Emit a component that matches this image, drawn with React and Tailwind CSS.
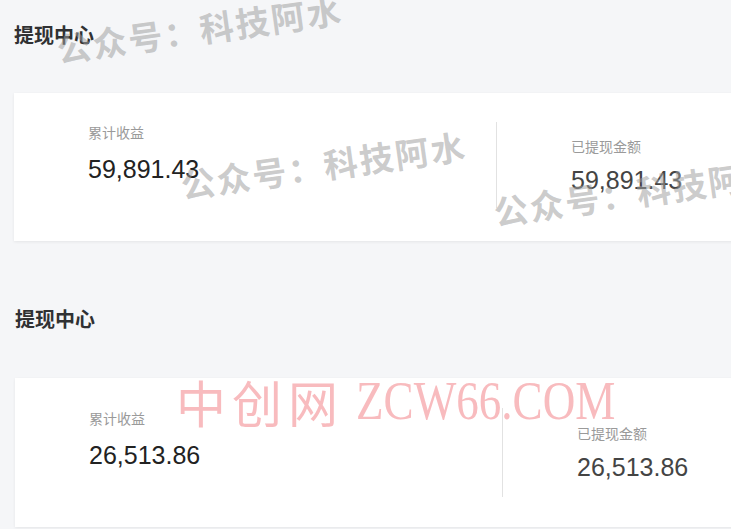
import React from "react";

const SANS = "font-['Liberation_Sans','Noto_Sans_CJK_SC',sans-serif]";

const panels = [
  { total: "59,891.43", withdrawn: "59,891.43", leftW: "w-[482px]", pad: "pt-[29px]", h: "h-[148px]", titleMt: "mt-0", cardMt: "mt-[43px]", dividerH: "h-[86px]" },
  { total: "26,513.86", withdrawn: "26,513.86", leftW: "w-[487px]", pad: "pt-[30px]", h: "h-[149px]", titleMt: "mt-[65px]", cardMt: "mt-[44px]", dividerH: "h-[89px]" },
];

// 提现中心卡片
const WithdrawPanel = ({ p, idx }) => (
  <section>
    <h2 className={`${p.titleMt} ${idx === 0 ? "ml-[14px]" : "ml-[15px]"} text-[20px] leading-[28px] font-bold text-[#303133]`}>
      提现中心
    </h2>
    <div className={`${p.cardMt} ${idx === 0 ? "ml-[14px]" : "ml-[15px]"} w-[760px] ${p.h} ${p.pad} bg-white shadow-[0_1px_3px_rgba(0,0,0,0.07)] flex items-start`}>
      <div className={`${p.leftW} pl-[74px] flex flex-col gap-[10px]`}>
        <span className="text-[14px] leading-[22px] text-[#9a9a9a]">累计收益</span>
        <span className="text-[25px] leading-[30px] text-[#222]">{p.total}</span>
      </div>
      <div className={`w-px ${p.dividerH} bg-[#e2e2e2]`} />
      <div className={`pl-[74px] ${p.dividerH} flex flex-col justify-center gap-[7px]`}>
        <span className="text-[14px] leading-[22px] text-[#9a9a9a]">已提现金额</span>
        <span className="text-[25px] leading-[30px] text-[#444]">{p.withdrawn}</span>
      </div>
    </div>
  </section>
);

const Mark = ({ className }) => (
  <div
    className={`absolute origin-left -rotate-[8deg] whitespace-nowrap text-[34px] leading-[40px] font-semibold tracking-[2px] text-[rgba(160,160,160,0.55)] font-['Noto_Sans_CJK_SC',serif] ${className}`}
  >
    公众号：科技阿水
  </div>
);

export default function App() {
  return (
    <div className={`relative w-full h-[529px] overflow-hidden bg-[#f5f6f8] pt-[22px] ${SANS}`}>
      {panels.map((p, i) => (
        <WithdrawPanel key={i} p={p} idx={i} />
      ))}

      <Mark className="left-[57px] top-[29px]" />
      <Mark className="left-[181px] top-[165px]" />
      <Mark className="left-[494px] top-[192px]" />

      <div className="absolute left-[176px] top-[370px] flex items-center whitespace-nowrap text-[rgba(244,150,155,0.65)] pointer-events-none">
        <span className="text-[50px] leading-[62px] tracking-[6px] font-['Noto_Sans_CJK_SC',serif]">中创网</span>
        <span className="ml-[12px] inline-block origin-left scale-x-[0.82] text-[55px] leading-[62px] font-['Liberation_Serif',serif]">
          ZCW66.COM
        </span>
      </div>
    </div>
  );
}
